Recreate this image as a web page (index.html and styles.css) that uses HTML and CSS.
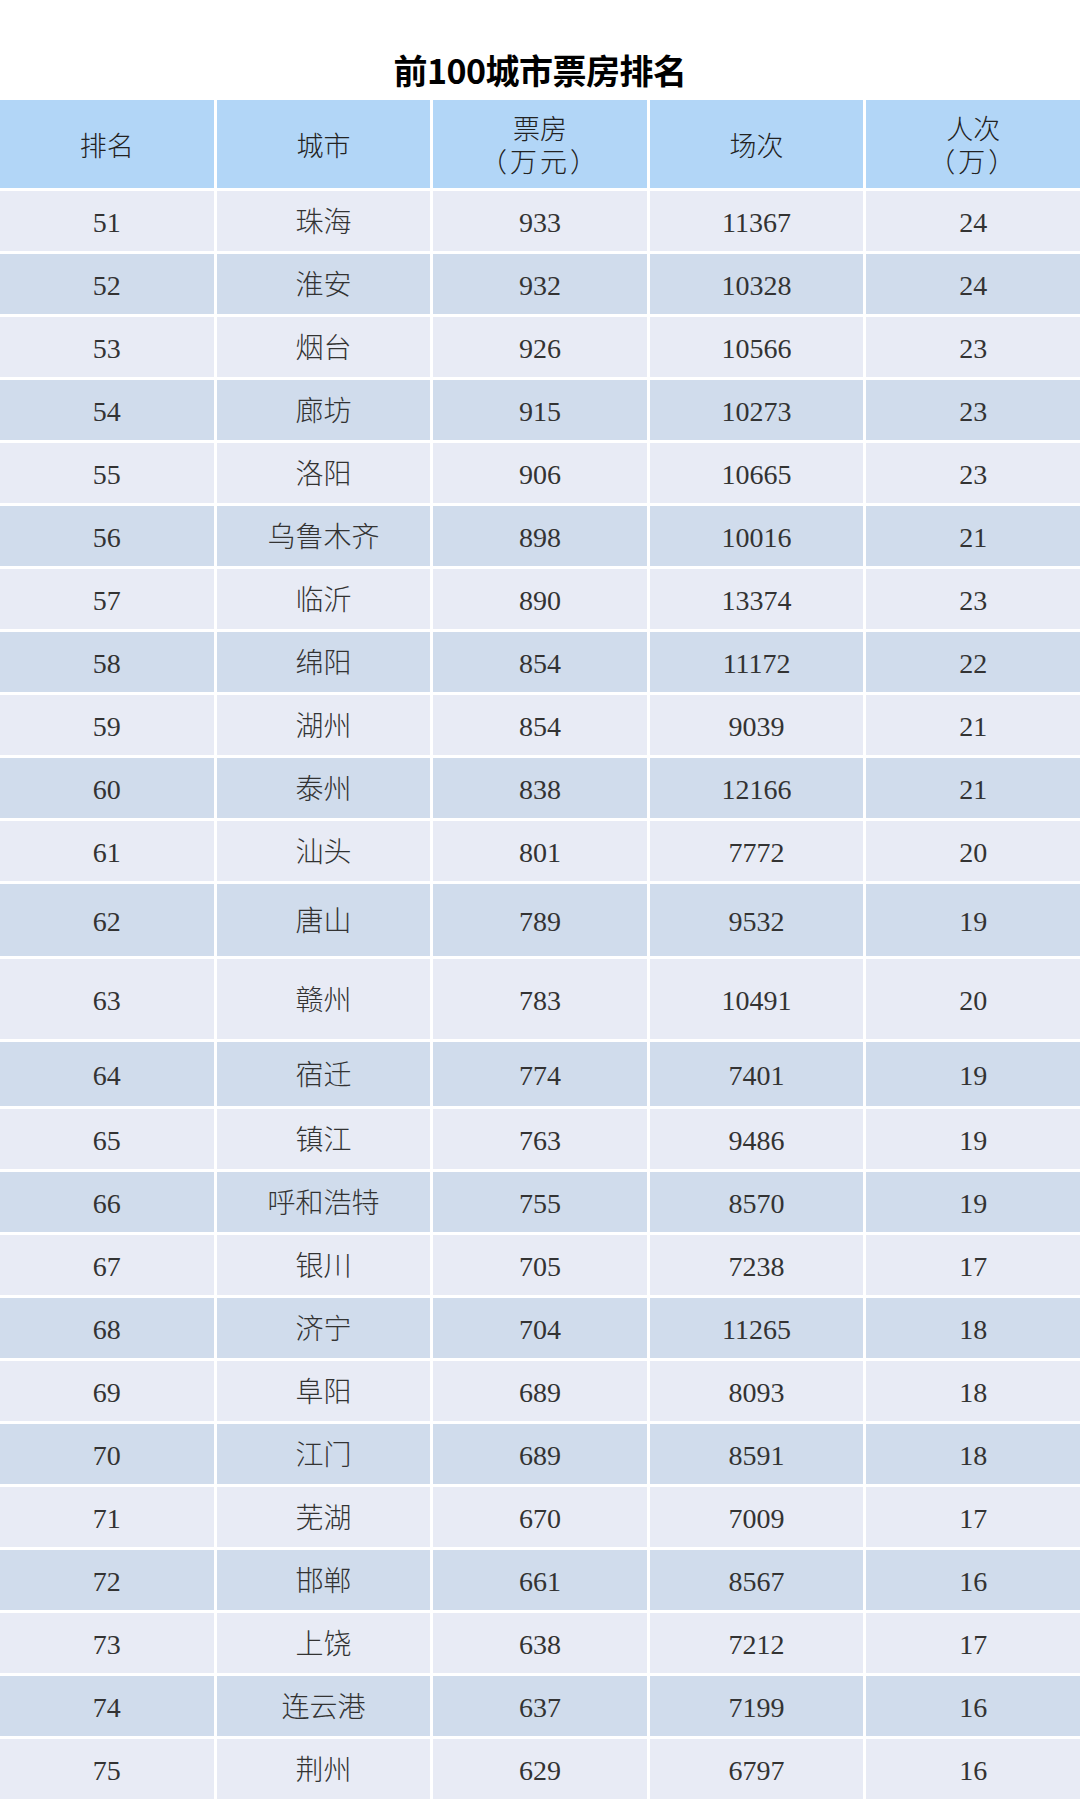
FILE: index.html
```html
<!DOCTYPE html>
<html lang="zh-CN">
<head>
<meta charset="utf-8">
<title>前100城市票房排名</title>
<link rel="stylesheet" href="styles.css">
</head>
<body>
<div class="page">
  <h1 class="title">前100城市票房排名</h1>
  <div class="table">
    <div class="row head">
      <div class="cell">排名</div>
      <div class="cell">城市</div>
      <div class="cell"><span>票房</span><span class="paren">（万元）</span></div>
      <div class="cell">场次</div>
      <div class="cell"><span>人次</span><span class="paren">（万）</span></div>
    </div>
    <div class="row odd"><div class="cell">51</div><div class="cell">珠海</div><div class="cell">933</div><div class="cell">11367</div><div class="cell">24</div></div>
    <div class="row even"><div class="cell">52</div><div class="cell">淮安</div><div class="cell">932</div><div class="cell">10328</div><div class="cell">24</div></div>
    <div class="row odd"><div class="cell">53</div><div class="cell">烟台</div><div class="cell">926</div><div class="cell">10566</div><div class="cell">23</div></div>
    <div class="row even"><div class="cell">54</div><div class="cell">廊坊</div><div class="cell">915</div><div class="cell">10273</div><div class="cell">23</div></div>
    <div class="row odd"><div class="cell">55</div><div class="cell">洛阳</div><div class="cell">906</div><div class="cell">10665</div><div class="cell">23</div></div>
    <div class="row even"><div class="cell">56</div><div class="cell">乌鲁木齐</div><div class="cell">898</div><div class="cell">10016</div><div class="cell">21</div></div>
    <div class="row odd"><div class="cell">57</div><div class="cell">临沂</div><div class="cell">890</div><div class="cell">13374</div><div class="cell">23</div></div>
    <div class="row even"><div class="cell">58</div><div class="cell">绵阳</div><div class="cell">854</div><div class="cell">11172</div><div class="cell">22</div></div>
    <div class="row odd"><div class="cell">59</div><div class="cell">湖州</div><div class="cell">854</div><div class="cell">9039</div><div class="cell">21</div></div>
    <div class="row even"><div class="cell">60</div><div class="cell">泰州</div><div class="cell">838</div><div class="cell">12166</div><div class="cell">21</div></div>
    <div class="row odd"><div class="cell">61</div><div class="cell">汕头</div><div class="cell">801</div><div class="cell">7772</div><div class="cell">20</div></div>
    <div class="row even h72"><div class="cell">62</div><div class="cell">唐山</div><div class="cell">789</div><div class="cell">9532</div><div class="cell">19</div></div>
    <div class="row odd h80"><div class="cell">63</div><div class="cell">赣州</div><div class="cell">783</div><div class="cell">10491</div><div class="cell">20</div></div>
    <div class="row even h64"><div class="cell">64</div><div class="cell">宿迁</div><div class="cell">774</div><div class="cell">7401</div><div class="cell">19</div></div>
    <div class="row odd"><div class="cell">65</div><div class="cell">镇江</div><div class="cell">763</div><div class="cell">9486</div><div class="cell">19</div></div>
    <div class="row even"><div class="cell">66</div><div class="cell">呼和浩特</div><div class="cell">755</div><div class="cell">8570</div><div class="cell">19</div></div>
    <div class="row odd"><div class="cell">67</div><div class="cell">银川</div><div class="cell">705</div><div class="cell">7238</div><div class="cell">17</div></div>
    <div class="row even"><div class="cell">68</div><div class="cell">济宁</div><div class="cell">704</div><div class="cell">11265</div><div class="cell">18</div></div>
    <div class="row odd"><div class="cell">69</div><div class="cell">阜阳</div><div class="cell">689</div><div class="cell">8093</div><div class="cell">18</div></div>
    <div class="row even"><div class="cell">70</div><div class="cell">江门</div><div class="cell">689</div><div class="cell">8591</div><div class="cell">18</div></div>
    <div class="row odd"><div class="cell">71</div><div class="cell">芜湖</div><div class="cell">670</div><div class="cell">7009</div><div class="cell">17</div></div>
    <div class="row even"><div class="cell">72</div><div class="cell">邯郸</div><div class="cell">661</div><div class="cell">8567</div><div class="cell">16</div></div>
    <div class="row odd"><div class="cell">73</div><div class="cell">上饶</div><div class="cell">638</div><div class="cell">7212</div><div class="cell">17</div></div>
    <div class="row even"><div class="cell">74</div><div class="cell">连云港</div><div class="cell">637</div><div class="cell">7199</div><div class="cell">16</div></div>
    <div class="row odd"><div class="cell">75</div><div class="cell">荆州</div><div class="cell">629</div><div class="cell">6797</div><div class="cell">16</div></div>
  </div>
</div>
</body>
</html>
```

FILE: styles.css
```css
html, body {
  margin: 0;
  padding: 0;
  background: #ffffff;
}

.page {
  width: 1080px;
  font-family: "Liberation Serif", "Noto Sans CJK SC", serif;
  color: #333333;
}

.title {
  margin: 0;
  padding: 50px 0 10px;
  height: 40px;
  line-height: 40px;
  text-align: center;
  font-family: "Noto Sans CJK SC", "Noto Sans", sans-serif;
  font-weight: 700;
  font-size: 34px;
  color: #000000;
  letter-spacing: -0.5px;
}

.table {
  display: flex;
  flex-direction: column;
  gap: 3px;
}

.row {
  display: grid;
  grid-template-columns: repeat(5, 1fr);
  column-gap: 3px;
  height: 60px;
}

.row.head {
  height: 88px;
}

.row.h72 { height: 72px; }
.row.h80 { height: 80px; }
.row.h64 { height: 64px; }

.cell {
  display: flex;
  flex-direction: column;
  align-items: center;
  justify-content: center;
  font-size: 28px;
  font-weight: 300;
  line-height: 30px;
  padding-top: 3px;
  box-sizing: border-box;
}

.head .cell {
  background: #b2d6f7;
  color: #222222;
  font-size: 27px;
  line-height: 33px;
  padding-top: 6px;
}

.paren {
  letter-spacing: 3px;
}

.odd .cell {
  background: #e8ebf5;
}

.even .cell {
  background: #d0dcec;
}
```
